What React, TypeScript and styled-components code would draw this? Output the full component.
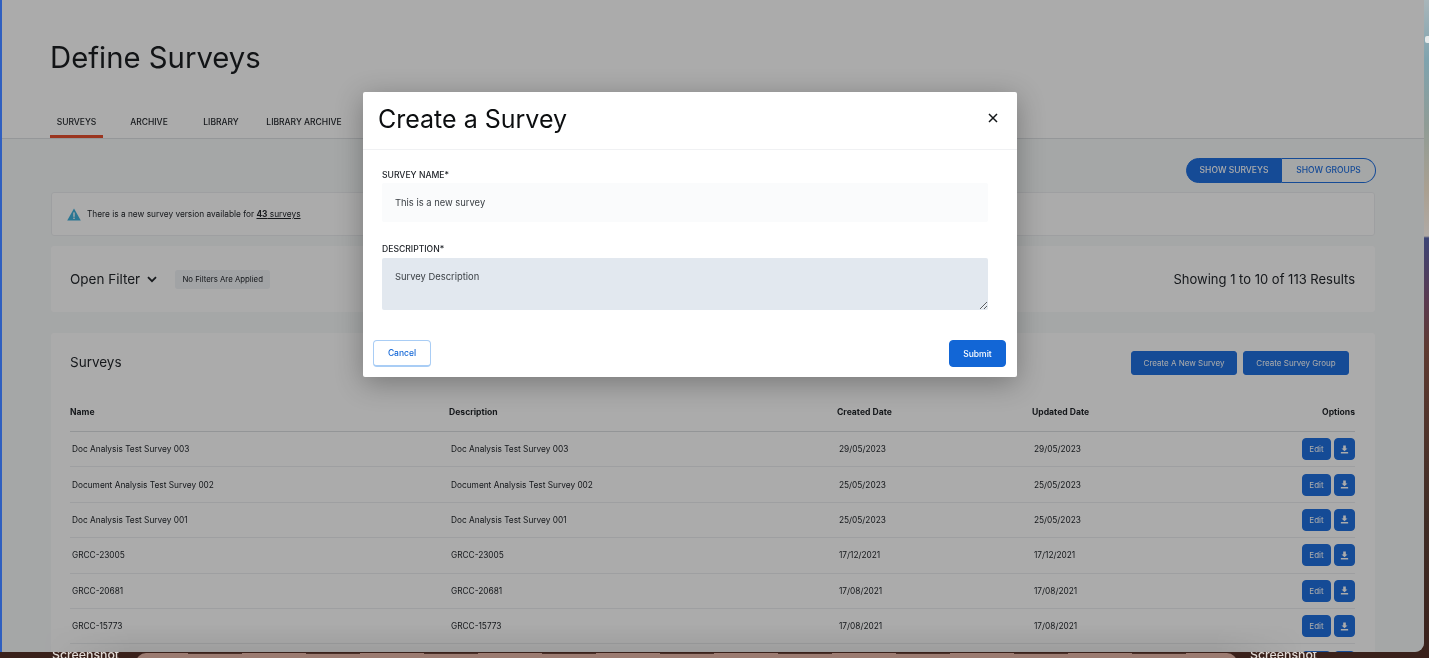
import React from "react";
import styled, { createGlobalStyle } from "styled-components";

const FONT_FAMILY = 'Inter, "Noto Sans", "Liberation Sans", sans-serif';

const GlobalStyle = createGlobalStyle`
  html, body {
    margin: 0;
    padding: 0;
    overflow: hidden;
  }
  * {
    box-sizing: border-box;
  }
`;

const Desktop = styled.div`
  position: relative;
  width: 1429px;
  height: 658px;
  overflow: hidden;
  font-family: ${FONT_FAMILY};
  filter: blur(0.35px);
  background: linear-gradient(
    180deg,
    #a9b6ba 0,
    #7fa3ae 60px,
    #8f9c96 125px,
    #aaa091 190px,
    #b0aaa5 236px,
    #3d4575 238px,
    #5a3a50 300px,
    #5e3a30 350px,
    #3f2c25 520px,
    #3a211b 100%
  );
`;

const Wallpaper = styled.div`
  position: absolute;
  left: 0;
  right: 0;
  bottom: 0;
  height: 6px;
  background: #3a211b;
  overflow: hidden;
`;

const Dock = styled.div`
  position: absolute;
  left: 136px;
  right: 192px;
  top: 1px;
  height: 12px;
  border-radius: 10px 10px 0 0;
  background: #9b7b71;
`;

const DockLabels = styled.div`
  position: absolute;
  left: 52px;
  right: 40px;
  top: 0;
  height: 1px;
  background: repeating-linear-gradient(90deg, #4a3028 0 54px, transparent 54px 118px);
`;

const DesktopLabel = styled.span<{ $left: number }>`
  position: absolute;
  left: ${(p) => p.$left}px;
  top: -4px;
  font-size: 12.3px;
  font-weight: 500;
  line-height: 14px;
  color: #e3dcd8;
`;

const CornerGlyph = styled.span`
  position: absolute;
  right: 0;
  top: 36px;
  width: 4px;
  height: 7px;
  border-radius: 2px 0 0 2px;
  background: #e6eaea;
`;

const AppWindow = styled.div`
  position: relative;
  width: 1424px;
  height: 652px;
  border-left: 2px solid #2f5fc0;
  border-bottom-right-radius: 9px;
  background: #f7f9fa;
  overflow: hidden;
  display: flex;
  flex-direction: column;
`;

const PageHead = styled.header`
  background: #ffffff;
  border-bottom: 1px solid #dfe2e5;
  padding: 40px 0 0 48px;
  height: 139px;
  flex-shrink: 0;
`;

const Title = styled.h1`
  margin: 0;
  font-size: 29.3px;
  line-height: 36px;
  font-weight: 400;
  color: #1b1e22;
`;

const Tabs = styled.nav`
  display: flex;
  margin-top: 28px;
`;

const Tab = styled.a<{ $active?: boolean; $width: number }>`
  width: ${(p) => p.$width}px;
  height: 34px;
  padding-top: 5px;
  display: flex;
  align-items: center;
  justify-content: center;
  font-size: 8.5px;
  font-weight: 500;
  color: #1f2328;
  border-bottom: 3px solid ${(p) => (p.$active ? "#e8502f" : "transparent")};
`;

const Body = styled.main`
  padding: 19px 49px 0;
  display: flex;
  flex-direction: column;
`;

const ToggleRow = styled.div`
  display: flex;
  justify-content: flex-end;
  margin: 0 -1px 9px 0;
`;

const Toggle = styled.button<{ $on?: boolean }>`
  height: 25px;
  padding: 0 0 1px;
  width: ${(p) => (p.$on ? 96 : 94)}px;
  font-family: inherit;
  font-size: 8.5px;
  font-weight: 500;
  color: ${(p) => (p.$on ? "#ffffff" : "#2070e0")};
  background: ${(p) => (p.$on ? "#2070e0" : "transparent")};
  border: 1px solid #2070e0;
  border-left-width: ${(p) => (p.$on ? 1 : 0)}px;
  border-radius: ${(p) => (p.$on ? "13px 0 0 13px" : "0 13px 13px 0")};
`;

const Card = styled.section`
  background: #ffffff;
  border-radius: 3px;
`;

const AlertCard = styled(Card)`
  height: 44px;
  border: 1px solid #eceef0;
  padding-left: 15px;
  display: flex;
  align-items: center;
  gap: 6px;
  font-size: 8.3px;
  color: #23272c;
  margin-bottom: 10px;
`;

const AlertCount = styled.span`
  text-decoration: underline;
  b {
    font-weight: 700;
  }
`;

const FilterCard = styled(Card)`
  height: 66px;
  padding: 0 19px;
  display: flex;
  align-items: center;
  margin-bottom: 21px;
`;

const FilterToggle = styled.span`
  display: flex;
  align-items: center;
  gap: 7px;
  font-size: 13.5px;
  color: #23272c;
  margin-right: 18px;
`;

const FilterChip = styled.span`
  height: 19px;
  width: 95px;
  border-radius: 3px;
  background: #f0f3f6;
  display: flex;
  align-items: center;
  justify-content: center;
  font-size: 7.8px;
  color: #23272c;
`;

const ResultCount = styled.span`
  margin-left: auto;
  margin-right: 1px;
  font-size: 13px;
  color: #23272c;
`;

const SurveysCard = styled(Card)`
  padding: 18px 20px 0 19px;
`;

const SurveysHead = styled.div`
  display: flex;
  align-items: center;
  height: 24px;
  margin-bottom: 31px;
`;

const SurveysTitle = styled.h2`
  margin: -2px auto 0 0;
  font-size: 13.5px;
  font-weight: 400;
  color: #1f2328;
`;

const HeadButton = styled.button`
  width: 106px;
  height: 24px;
  margin-right: 6px;
  font-family: inherit;
  font-size: 8px;
  color: #ffffff;
  background: #2070e0;
  border: 1px solid #2070e0;
  border-radius: 3px;
  padding: 0;
`;

const Row = styled.div<{ $head?: boolean }>`
  display: grid;
  grid-template-columns: 379px 388px 195px 1fr auto;
  align-items: center;
  height: ${(p) => (p.$head ? 26 : 35.4)}px;
  border-bottom: 1px solid ${(p) => (p.$head ? "#dcdfe2" : "#eceef0")};
  padding-bottom: ${(p) => (p.$head ? 14 : 0)}px;
  font-size: ${(p) => (p.$head ? 8.6 : 8.3)}px;
  font-weight: ${(p) => (p.$head ? 700 : 400)};
  color: #23272c;
  flex-shrink: 0;
`;

const Cell = styled.span`
  padding-left: 2px;
`;

const HeadCell = styled.span``;

const Options = styled.div`
  display: flex;
  gap: 3px;
`;

const RowButton = styled.button<{ $wide?: boolean }>`
  width: ${(p) => (p.$wide ? 29 : 21)}px;
  height: 22px;
  padding: 0;
  border: 1px solid #2070e0;
  border-radius: 4px;
  background: #2070e0;
  color: #ffffff;
  font-family: inherit;
  font-size: 8px;
  display: flex;
  align-items: center;
  justify-content: center;
`;

const Backdrop = styled.div`
  position: absolute;
  inset: 0;
  background: rgba(0, 0, 0, 0.33);
`;

const DockShadow = styled.div`
  position: absolute;
  left: 40px;
  right: 120px;
  bottom: 0;
  height: 28px;
  background: linear-gradient(180deg, rgba(0, 0, 0, 0), rgba(0, 0, 0, 0.08));
  mask-image: linear-gradient(90deg, transparent, #000 90px, #000 calc(100% - 90px), transparent);
`;

const Modal = styled.div`
  position: absolute;
  left: 361px;
  top: 92px;
  width: 654px;
  height: 285px;
  background: #ffffff;
  border-radius: 2px;
  box-shadow: 0 6px 28px rgba(0, 0, 0, 0.3);
  display: flex;
  flex-direction: column;
`;

const ModalHead = styled.div`
  height: 58px;
  flex-shrink: 0;
  border-bottom: 1px solid #f0f1f3;
  padding: 0 18px 3px 15px;
  display: flex;
  align-items: center;
  justify-content: space-between;
`;

const ModalTitle = styled.h2`
  margin: 0;
  font-size: 25px;
  font-weight: 400;
  color: #0c0e10;
`;

const CloseButton = styled.button`
  width: 12px;
  height: 12px;
  padding: 0;
  margin-top: -2px;
  border: 0;
  background: transparent;
  display: flex;
`;

const ModalForm = styled.form`
  flex: 1;
  display: flex;
  flex-direction: column;
  padding: 17px 29px 0 19px;
`;

const Label = styled.label`
  display: block;
  height: 16px;
  font-size: 8.6px;
  line-height: 16px;
  font-weight: 500;
  color: #23272c;
`;

const DescriptionLabel = styled(Label)`
  height: 17px;
`;

const TextInput = styled.input`
  display: block;
  width: 100%;
  height: 39px;
  border: 0;
  outline: 0;
  border-radius: 2px;
  background: #fafbfc;
  padding: 0 13px;
  margin-bottom: 19px;
  font-family: inherit;
  font-size: 9.4px;
  color: #3c4146;
`;

const TextArea = styled.textarea`
  display: block;
  width: 100%;
  height: 52px;
  border: 0;
  outline: 0;
  border-radius: 2px;
  background: #e2e8ef;
  padding: 13px 13px 0;
  font-family: inherit;
  font-size: 9.4px;
  line-height: 12px;
  color: #3c4146;
`;

const ModalFoot = styled.div`
  display: flex;
  justify-content: space-between;
  padding: 30px 11px 0 10px;
  margin: 0 -29px 0 -19px;
`;

const ModalButton = styled.button<{ $primary?: boolean }>`
  width: ${(p) => (p.$primary ? 57 : 58)}px;
  height: 27px;
  padding: 0;
  border-radius: 4px;
  font-family: inherit;
  font-size: 8.5px;
  font-weight: 500;
  border: 1px solid ${(p) => (p.$primary ? "#1266d6" : "#a9cdf5")};
  border-bottom-width: ${(p) => (p.$primary ? 1 : 2)}px;
  background: ${(p) => (p.$primary ? "#1266d6" : "#ffffff")};
  color: ${(p) => (p.$primary ? "#ffffff" : "#1266d6")};
`;

const rows = [
  { name: "Doc Analysis Test Survey 003", created: "29/05/2023", updated: "29/05/2023" },
  { name: "Document Analysis Test Survey 002", created: "25/05/2023", updated: "25/05/2023" },
  { name: "Doc Analysis Test Survey 001", created: "25/05/2023", updated: "25/05/2023" },
  { name: "GRCC-23005", created: "17/12/2021", updated: "17/12/2021" },
  { name: "GRCC-20681", created: "17/08/2021", updated: "17/08/2021" },
  { name: "GRCC-15773", created: "17/08/2021", updated: "17/08/2021" },
  { name: "", created: "", updated: "" },
];

const WarningIcon = () => (
  <svg width="14" height="13" viewBox="0 0 14 13">
    <path d="M7 0.4 13.8 12.6H0.2Z" fill="#3fb0dc" />
    <rect x="6.3" y="4.4" width="1.4" height="4.4" fill="#fff" />
    <rect x="6.3" y="9.6" width="1.4" height="1.4" fill="#fff" />
  </svg>
);

const ChevronIcon = () => (
  <svg width="10" height="7" viewBox="0 0 10 7" fill="none">
    <path d="M1 1.2 5 5.2 9 1.2" stroke="#23272c" strokeWidth="1.8" />
  </svg>
);

const DownloadIcon = () => (
  <svg width="9" height="9" viewBox="0 0 9 9">
    <path d="M3.2 0.5h2.6v3h1.7L4.5 6.3 1.5 3.5h1.7Z" fill="#fff" />
    <rect x="0.8" y="7" width="7.4" height="1.6" rx="0.4" fill="#fff" />
  </svg>
);

const CloseIcon = () => (
  <svg width="12" height="12" viewBox="0 0 12 12" fill="none">
    <path d="M2 2 10 10M10 2 2 10" stroke="#14171a" strokeWidth="1.5" />
  </svg>
);

const App: React.FC = () => (
  <Desktop>
    <GlobalStyle />
    <CornerGlyph />
    <Wallpaper>
      <DesktopLabel $left={52}>Screenshot</DesktopLabel>
      <Dock>
        <DockLabels />
      </Dock>
      <DesktopLabel $left={1250}>Screenshot</DesktopLabel>
    </Wallpaper>
    <AppWindow>
      <PageHead>
        <Title>Define Surveys</Title>
        <Tabs>
          <Tab $active $width={53}>SURVEYS</Tab>
          <Tab $width={92}>ARCHIVE</Tab>
          <Tab $width={52}>LIBRARY</Tab>
          <Tab $width={114}>LIBRARY ARCHIVE</Tab>
        </Tabs>
      </PageHead>
      <Body>
        <ToggleRow>
          <Toggle $on>SHOW SURVEYS</Toggle>
          <Toggle>SHOW GROUPS</Toggle>
        </ToggleRow>
        <AlertCard>
          <WarningIcon />
          <span>
            There is a new survey version available for{" "}
            <AlertCount>
              <b>43</b> surveys
            </AlertCount>
          </span>
        </AlertCard>
        <FilterCard>
          <FilterToggle>
            Open Filter <ChevronIcon />
          </FilterToggle>
          <FilterChip>No Filters Are Applied</FilterChip>
          <ResultCount>Showing 1 to 10 of 113 Results</ResultCount>
        </FilterCard>
        <SurveysCard>
          <SurveysHead>
            <SurveysTitle>Surveys</SurveysTitle>
            <HeadButton>Create A New Survey</HeadButton>
            <HeadButton>Create Survey Group</HeadButton>
          </SurveysHead>
          <Row $head>
            <HeadCell>Name</HeadCell>
            <HeadCell>Description</HeadCell>
            <HeadCell>Created Date</HeadCell>
            <HeadCell>Updated Date</HeadCell>
            <HeadCell>Options</HeadCell>
          </Row>
          {rows.map((r, i) => (
            <Row key={i}>
              <Cell>{r.name}</Cell>
              <Cell>{r.name}</Cell>
              <Cell>{r.created}</Cell>
              <Cell>{r.updated}</Cell>
              <Options>
                <RowButton $wide>{r.name && "Edit"}</RowButton>
                <RowButton>
                  <DownloadIcon />
                </RowButton>
              </Options>
            </Row>
          ))}
        </SurveysCard>
      </Body>
      <DockShadow />
      <Backdrop />
      <Modal>
        <ModalHead>
          <ModalTitle>Create a Survey</ModalTitle>
          <CloseButton type="button">
            <CloseIcon />
          </CloseButton>
        </ModalHead>
        <ModalForm>
          <Label htmlFor="survey-name">SURVEY NAME*</Label>
          <TextInput id="survey-name" defaultValue="This is a new survey" />
          <DescriptionLabel htmlFor="survey-description">DESCRIPTION*</DescriptionLabel>
          <TextArea id="survey-description" defaultValue="Survey Description" />
          <ModalFoot>
            <ModalButton type="button">Cancel</ModalButton>
            <ModalButton type="button" $primary>
              Submit
            </ModalButton>
          </ModalFoot>
        </ModalForm>
      </Modal>
    </AppWindow>
  </Desktop>
);

export default App;
